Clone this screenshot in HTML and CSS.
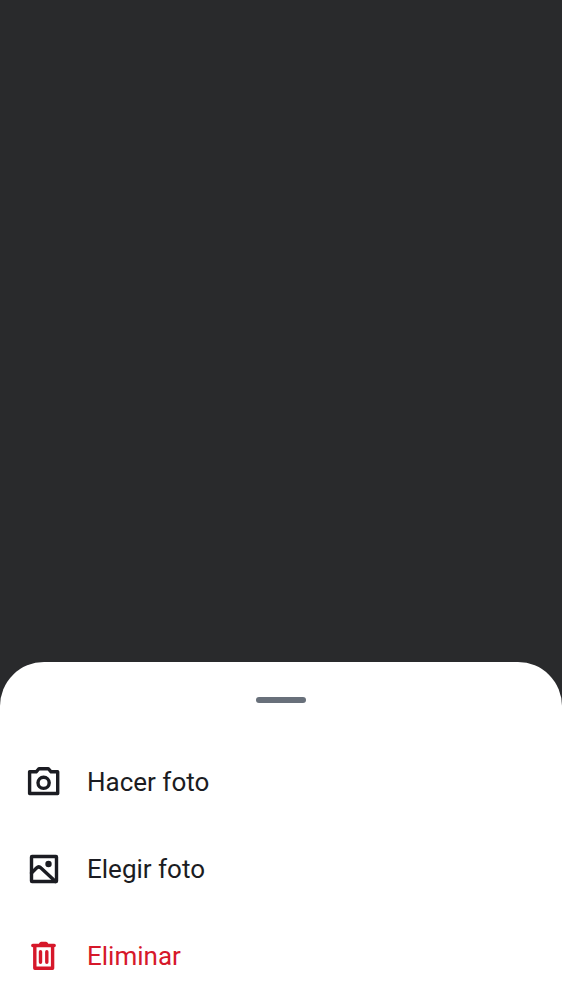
FILE: index.html
```html
<!DOCTYPE html>
<html lang="es">
<head>
<meta charset="utf-8">
<meta name="viewport" content="width=device-width, initial-scale=1">
<title>Foto</title>
<link rel="stylesheet" href="styles.css">
</head>
<body>
<main class="screen">
  <section class="sheet" role="dialog" aria-label="Opciones de foto">
    <div class="handle"></div>
    <div class="actions">
      <button class="action" type="button">
        <svg class="icon" viewBox="0 0 36 35" aria-hidden="true">
          <path d="M3.6 7.8H10.2L13 4.7H22.3L25.1 7.8H31.7V29.5H3.6Z"/>
          <circle cx="17.6" cy="18.8" r="5.6"/>
        </svg>
        <span>Hacer foto</span>
      </button>
      <button class="action" type="button">
        <svg class="icon" viewBox="0 0 36 35" aria-hidden="true">
          <rect x="5.5" y="5.5" width="25" height="25" rx="0.5"/>
          <path d="M5.5 22L10.5 17Q12.8 14.8 15 17L29.5 30.5"/>
          <circle class="dot" cx="22.5" cy="13" r="3.2"/>
        </svg>
        <span>Elegir foto</span>
      </button>
      <button class="action danger" type="button">
        <svg class="icon" viewBox="0 0 36 35" aria-hidden="true">
          <path d="M6.8 7.5H28.2M14.5 6.2L15.2 5.5H20L20.7 6.2M8.8 7.5V30.3H26.6V7.5M14.5 13.8V24.2M20.8 13.8V24.2"/>
        </svg>
        <span>Eliminar</span>
      </button>
    </div>
  </section>
</main>
</body>
</html>
```
FILE: styles.css
```css
* {
  box-sizing: border-box;
}

body {
  margin: 0;
  font-family: Roboto, "Liberation Sans", sans-serif;
}

.screen {
  min-height: 100vh;
  display: flex;
  flex-direction: column;
  justify-content: flex-end;
  background: #292a2c;
}

.sheet {
  padding: 35px 0 1px;
  border-radius: 44px 44px 0 0;
  background: #fff;
}

.handle {
  width: 50px;
  height: 6px;
  margin: 0 auto 35px;
  border-radius: 3px;
  background: #68707a;
}

.actions {
  display: flex;
  flex-direction: column;
}

.action {
  display: flex;
  align-items: center;
  gap: 25px;
  height: 87px;
  padding: 0 26px;
  border: 0;
  background: none;
  color: #1b1c22;
  font: inherit;
  font-size: 26px;
  line-height: 36px;
  text-align: left;
  cursor: pointer;
}

.danger {
  color: #d6182a;
}

.icon {
  flex: none;
  width: 36px;
  height: 35px;
  fill: none;
  stroke: currentColor;
  stroke-width: 3.4;
  stroke-linecap: round;
  stroke-linejoin: round;
}

.dot {
  fill: currentColor;
  stroke: none;
}
```
